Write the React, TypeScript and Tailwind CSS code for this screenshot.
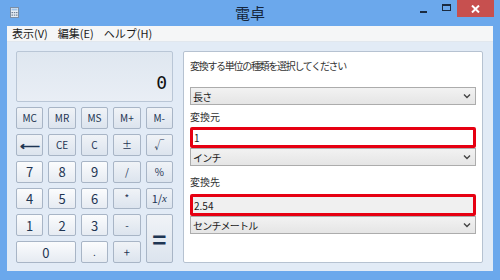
import React from "react";

const jp = { fontFamily: '"Noto Sans CJK JP", "Noto Sans", sans-serif' };

type Key = { label: React.ReactNode; op?: boolean; cls?: string; size?: string };

const keys: Key[] = [
  { label: "MC", op: true, size: "text-[10px]" },
  { label: "MR", op: true, size: "text-[10px]" },
  { label: "MS", op: true, size: "text-[10px]" },
  { label: "M+", op: true, size: "text-[10px]" },
  { label: "M-", op: true, size: "text-[10px]" },
  { label: "⟵", op: true, size: "text-[14px] font-bold" },
  { label: "CE", op: true, size: "text-[10px]" },
  { label: "C", op: true, size: "text-[10px]" },
  { label: "±", op: true, size: "text-[10px]" },
  { label: "√", op: true, size: "text-[10px]" },
  { label: "7" },
  { label: "8" },
  { label: "9" },
  { label: "/", op: true, size: "text-[10px]" },
  { label: "%", op: true, size: "text-[10px]" },
  { label: "4" },
  { label: "5" },
  { label: "6" },
  { label: "*", op: true, size: "text-[10px]" },
  { label: <>1/<i style={{ fontFamily: '"Liberation Serif", serif' }}>x</i></>, op: true, size: "text-[11px]" },
  { label: "1" },
  { label: "2" },
  { label: "3" },
  { label: "-", op: true, size: "text-[10px]" },
  { label: "=", op: true, size: "text-[24px] font-bold", cls: "row-span-2" },
  { label: "0", cls: "col-span-2" },
  { label: ".", size: "text-[10px]" },
  { label: "+", op: true, size: "text-[11px]" },
];

function Select({ value }: { value: string }) {
  return (
    <div className="h-[18px] border border-[#acacac] bg-gradient-to-b from-[#f2f2f2] to-[#e5e5e5] flex items-center justify-between pl-[2px] pr-[4px] text-[10px] tracking-[-0.8px] text-[#1a1a1a]">
      <span>{value}</span>
      <svg width="8" height="6" viewBox="0 0 8 6">
        <path d="M1 1.5 L4 4.5 L7 1.5" fill="none" stroke="#444" strokeWidth="1.4" />
      </svg>
    </div>
  );
}

export default function App() {
  return (
    <div className="w-[500px] h-[280px] bg-[#6ba8ec] flex flex-col overflow-hidden" style={jp}>
      {/* title bar */}
      <div className="h-[26px] relative flex items-center">
        <svg className="absolute left-[10px] top-[7px]" width="9" height="11" viewBox="0 0 9 11">
          <rect x="0.5" y="0.5" width="8" height="10" fill="#e8eef5" stroke="#7a8ea6" />
          <rect x="1.5" y="1.5" width="6" height="2" fill="#9fc3e8" />
          <rect x="1.5" y="5" width="1.5" height="1.2" fill="#6d7f95" />
          <rect x="3.8" y="5" width="1.5" height="1.2" fill="#6d7f95" />
          <rect x="6" y="5" width="1.5" height="1.2" fill="#6d7f95" />
          <rect x="1.5" y="7.5" width="1.5" height="1.2" fill="#6d7f95" />
          <rect x="3.8" y="7.5" width="1.5" height="1.2" fill="#6d7f95" />
          <rect x="6" y="7.5" width="1.5" height="1.2" fill="#6d7f95" />
        </svg>
        <div className="w-full text-center text-[15px] text-[#15263d] leading-none -mt-[2px]">電卓</div>
        <div className="absolute right-[6px] top-0 flex items-start">
          <div className="w-[20px] h-[17px] flex items-center pl-[1px]">
            <div className="w-[7px] h-[2px] bg-[#1b2b40] mt-[6px]" />
          </div>
          <div className="w-[14px] h-[17px] flex items-center justify-center">
            <div className="w-[9px] h-[7px] border border-[#1b2b40] border-t-2 -mt-[2px]" />
          </div>
          <div className="w-[37px] h-[17px] bg-[#c7504f] flex items-center justify-center ml-[4px]">
            <svg width="9" height="8" viewBox="0 0 9 8">
              <path d="M1 0.5 L8 7.5 M8 0.5 L1 7.5" stroke="#fff" strokeWidth="2" />
            </svg>
          </div>
        </div>
      </div>

      {/* window */}
      <div className="mx-[7px] h-[245px] flex flex-col">
        <div className="h-[16px] bg-[#f5f6f7] border-b border-[#e1e7ee] flex items-center gap-[10px] pl-[5px] text-[11px] text-[#1a1a1a] leading-none">
          <span>表示(V)</span>
          <span>編集(E)</span>
          <span>ヘルプ(H)</span>
        </div>
        <div className="flex-1 bg-[#e2ebf6] flex gap-[10px] pl-[9px] pr-[10px] pt-[9px] pb-[8px]">
          {/* calculator */}
          <div className="w-[157px] flex flex-col gap-[5px]">
            <div className="h-[51px] rounded-[2px] border border-[#b9c6d6] bg-gradient-to-b from-[#dfe7f0] to-[#e9eef5] flex items-end justify-end px-[5px] pb-[9px]">
              <span className="text-[18px] leading-none text-[#101010]" style={{ fontFamily: '"DejaVu Sans Mono", monospace' }}>0</span>
            </div>
            <div className="flex-1 grid grid-cols-5 grid-rows-6 gap-x-[5px] gap-y-[5px]">
              {keys.map((k, i) => (
                <div
                  key={i}
                  className={`rounded-[2px] border border-[#a8b5c6] flex items-center justify-center text-[#1e3553] leading-none ${
                    k.op
                      ? "bg-gradient-to-b from-[#f0f3f7] to-[#dce4ee]"
                      : "bg-gradient-to-b from-[#fbfcfd] to-[#e6ebf2]"
                  } ${k.size ?? "text-[13px]"} ${k.cls ?? ""}`}
                >
                  {k.label}
                </div>
              ))}
            </div>
          </div>

          {/* unit conversion */}
          <div className="flex-1 bg-white border border-[#b6c2d1] rounded-[2px] px-[6px] pt-[7px] text-[10px] text-[#1a1a1a]">
            <div className="leading-[14px] text-[#333] tracking-[-1.3px]">変換する単位の種類を選択してください</div>
            <div className="mt-[14px]">
              <Select value="長さ" />
            </div>
            <div className="mt-[5px] leading-[14px] text-[#333]">変換元</div>
            <div className="mt-[3px] h-[21px] border-[3px] border-[#e60012] rounded-[2px] bg-white flex items-center pl-[1px]">1</div>
            <Select value="インチ" />
            <div className="mt-[9px] leading-[14px] text-[#333]">変換先</div>
            <div className="mt-[5px] h-[22px] border-[3px] border-[#e60012] rounded-[2px] bg-[#f0f0f0] flex items-center pl-[1px]">2.54</div>
            <Select value="センチメートル" />
          </div>
        </div>
      </div>
    </div>
  );
}
